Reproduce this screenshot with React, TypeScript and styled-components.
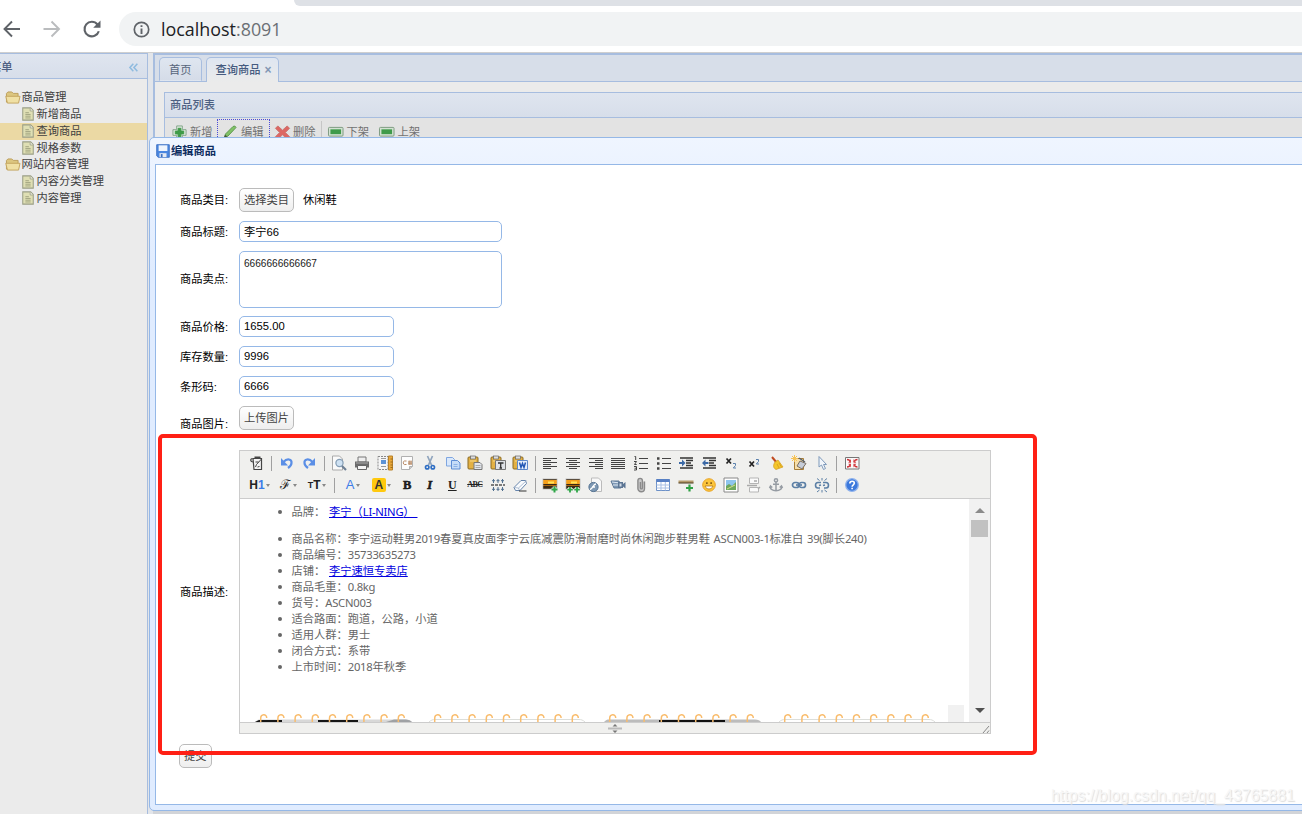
import React from 'react';
import styled, { createGlobalStyle } from 'styled-components';

const UI = `"Liberation Sans", "Noto Sans CJK SC", sans-serif`;
const LINE = '#a7bddf';

const Global = createGlobalStyle`
  * { box-sizing: border-box; }
  html, body { margin: 0; padding: 0; overflow: hidden; }
  body { font: 11.25px/17px ${UI}; color: #000; }
`;

const Page = styled.div`
  position: relative;
  width: 1302px;
  height: 814px;
  overflow: hidden;
  display: flex;
  flex-direction: column;
  background: #e2e5ea;
`;

/* ---------- browser bar ---------- */
const BrowserBar = styled.header`
  flex: none;
  height: 53px;
  background: #fff;
  border-bottom: 1px solid #cfcfcf;
  display: flex;
  flex-direction: column;
`;
const TabStrip = styled.div`
  flex: none;
  height: 6px;
  margin-left: 294px;
  background: #dee1e6;
  border-bottom-left-radius: 8px;
`;
const NavRow = styled.div`
  display: flex;
  align-items: center;
  height: 34px;
  margin-top: 6px;
`;
const NavIcons = styled.svg`
  flex: none;
  width: 119px;
  height: 34px;
`;
const Address = styled.div`
  flex: 1;
  height: 34px;
  display: flex;
  align-items: center;
  gap: 11px;
  padding-left: 14px;
  background: #f1f3f4;
  border-radius: 17px 0 0 17px;
  font: 17.9px/34px "Open Sans", sans-serif;
  color: #202124;
`;
const Port = styled.span`
  color: #6b6f74;
`;

/* ---------- page frame ---------- */
const Work = styled.div`
  flex: 1;
  display: flex;
  min-height: 0;
`;
const Sidebar = styled.aside`
  flex: none;
  width: 148px;
  background: #ebebeb;
  border: 1px solid ${LINE};
  border-width: 1px 1px 0 0;
`;
const SideHead = styled.div`
  height: 25px;
  display: flex;
  justify-content: space-between;
  align-items: center;
  padding: 2px 9px 0 0;
  background: linear-gradient(#dfe5ef, #d7deea);
  border-bottom: 1px solid ${LINE};
  color: #4d6082;
  font-weight: 500;
`;
const SideTitle = styled.span`
  margin-left: -10px;
`;
const Tree = styled.ul`
  list-style: none;
  margin: 0;
  padding: 10px 0 0;
`;
const Node = styled.li<{ $depth: number; $active?: boolean }>`
  height: 16.85px;
  line-height: 16.85px;
  display: flex;
  align-items: center;
  gap: ${p => (p.$depth ? 2 : 1)}px;
  padding-left: ${p => (p.$depth ? 20.5 : 5)}px;
  background: ${p => (p.$active ? '#ebd9a4' : 'transparent')};
  color: #404040;
  white-space: nowrap;
`;
const Main = styled.main`
  flex: 1;
  margin-left: 5px;
  background: #ebebeb;
  border-left: 2px solid ${LINE};
  border-top: 2px solid ${LINE};
`;
const TabBar = styled.div`
  height: 27px;
  display: flex;
  align-items: flex-end;
  gap: 4px;
  padding-left: 4px;
  background: #d7dee9;
  border-bottom: 1px solid ${LINE};
`;
const Tab = styled.div<{ $active?: boolean }>`
  display: flex;
  align-items: center;
  height: ${p => (p.$active ? 25 : 24)}px;
  margin-bottom: ${p => (p.$active ? -1 : 0)}px;
  padding: ${p => (p.$active ? '1px 6px 0 9px' : '2px 9px 0 9px')};
  border: 1px solid ${LINE};
  border-bottom-width: ${p => (p.$active ? 0 : 1)}px;
  border-bottom-color: transparent;
  border-radius: 5px 5px 0 0;
  background: ${p => (p.$active ? 'linear-gradient(#dfe6f1, #ebebeb)' : 'linear-gradient(#dfe6f0, #d5dce8)')};
  color: ${p => (p.$active ? '#465b80' : '#57657b')};
  font-weight: ${p => (p.$active ? 500 : 400)};
`;
const TabClose = styled.span`
  margin-left: 4px;
  color: #8296b4;
  font-size: 12px;
  font-weight: 700;
`;
const ListPanel = styled.section`
  margin: 10px 0 0 9px;
  border: 1px solid ${LINE};
  border-right: 0;
  height: 60px;
`;
const ListHead = styled.div`
  height: 25px;
  padding: 4px 5px;
  background: linear-gradient(#dfe5ef, #d7deea);
  border-bottom: 1px solid ${LINE};
  color: #4d6082;
  font-weight: 500;
`;
const ListTools = styled.div`
  display: flex;
  height: 34px;
  padding: 1px 0 0 2px;
  background: #e3e3e3;
`;
const ListTool = styled.div<{ $focus?: boolean; $width: number }>`
  display: flex;
  align-items: center;
  gap: 3px;
  height: 26px;
  width: ${p => p.$width}px;
  padding-left: 4px;
  border: 1px dotted ${p => (p.$focus ? '#4b4bd8' : 'transparent')};
  color: #727272;
  white-space: nowrap;
`;
const ToolLine = styled.i`
  width: 1px;
  height: 22px;
  margin: 2px 1px 0 1px;
  background: #c6c6c6;
`;

/* ---------- edit window ---------- */
const Shadow = styled.div`
  position: absolute;
  left: 153px;
  top: 811px;
  width: 1149px;
  height: 3px;
  background: #d2d4d8;
`;
const EditWindow = styled.section`
  position: absolute;
  left: 149px;
  top: 137px;
  width: 1170px;
  height: 674px;
  padding: 0 5px 5px;
  border: 1px solid #95b8e7;
  border-radius: 5px;
  background: linear-gradient(#eff5ff, #e0ecff 20%);
  display: flex;
  flex-direction: column;
`;
const WindowTitle = styled.h1`
  flex: none;
  display: flex;
  align-items: center;
  gap: 1px;
  height: 26px;
  margin: 0;
  padding-left: 1px;
  font-size: 11.25px;
  font-weight: 700;
  color: #0e2d5f;
`;
const WindowBody = styled.form`
  flex: 1;
  border: 1px solid #95b8e7;
  background: #fff;
  padding: 23px 0 0 24px;
`;
const Row = styled.div<{ $h: number; $gap?: number }>`
  display: flex;
  align-items: center;
  height: ${p => p.$h}px;
  margin-bottom: ${p => p.$gap ?? 9}px;
`;
const Label = styled.label<{ $drop?: number }>`
  width: 59px;
  padding-top: ${p => p.$drop ?? 0}px;
`;
const Button = styled.button`
  height: 24px;
  padding: 0 4px;
  border: 1px solid #bbb;
  border-radius: 5px;
  background: linear-gradient(#fff, #eee);
  color: #444;
  font: 11.25px/20px ${UI};
`;
const Submit = styled(Button)`
  display: block;
  margin-left: -1px;
`;
const Note = styled.span`
  margin-left: 9px;
`;
const Input = styled.input<{ $w: number }>`
  width: ${p => p.$w}px;
  height: 21px;
  padding: 0 4px 1.5px;
  border: 1px solid #95b8e7;
  border-radius: 5px;
  outline: 0;
  font: 11.25px ${UI};
`;
const Area = styled.textarea`
  width: 263px;
  height: 57px;
  padding: 5px 4px;
  border: 1px solid #95b8e7;
  border-radius: 5px;
  outline: 0;
  resize: none;
  overflow: hidden;
  color: #222;
  font: 10.1px/13px ${UI};
`;

/* ---------- rich text editor ---------- */
const Editor = styled.div`
  width: 752px;
  height: 284px;
  border: 1px solid #ccc;
  display: flex;
  flex-direction: column;
`;
const EditorTools = styled.div`
  flex: none;
  height: 48px;
  padding: 1px 0 0 5.5px;
  background: #f0f0ee;
  border-bottom: 1px solid #ccc;
`;
const ToolRow = styled.div`
  display: flex;
  align-items: center;
  height: 22px;
`;
const Slot = styled.span<{ $w: number }>`
  flex: none;
  width: ${p => p.$w}px;
  height: 18px;
  display: flex;
  align-items: center;
  justify-content: center;
`;
const Bar = styled.i`
  flex: none;
  width: 1px;
  height: 15px;
  margin: 0 3.2px;
  background: #a0a0a0;
`;
const Glyph = styled.svg`
  display: block;
  flex: none;
  overflow: visible;
`;
const Canvas = styled.div`
  flex: 1;
  min-height: 0;
  display: flex;
  background: #fff;
`;
const Content = styled.div`
  flex: 1;
  min-width: 0;
  display: flex;
  flex-direction: column;
  color: #666;
  font: 11.25px/16px "Noto Sans", "Noto Sans CJK SC", sans-serif;
`;
const Bullets = styled.ul<{ $top: number }>`
  list-style: none;
  margin: ${p => p.$top}px 0 0;
  padding: 0 0 0 38px;
`;
const Bullet = styled.li`
  height: 16px;
  display: flex;
  align-items: center;
  white-space: pre;
  &::before {
    content: '';
    width: 4px;
    height: 4px;
    margin: 0 9.5px 0 0;
    border-radius: 2px;
    background: #666;
  }
`;
const Latin = styled.span`
  letter-spacing: -0.27px;
  word-spacing: 1px;
`;
const Link = styled.a`
  margin-left: 0.8px;
  color: #0000e0;
  text-decoration: underline;
`;
const Strip = styled.svg`
  display: block;
  margin-top: auto;
  overflow: visible;
`;
const Scroll = styled.div`
  width: 21px;
  display: flex;
  flex-direction: column;
  align-items: center;
  justify-content: space-between;
  background: #f1f1f1;
`;
const Thumb = styled.div`
  width: 17px;
  height: 17px;
  margin-top: 6px;
  background: #c1c1c1;
`;
const ScrollTop = styled.div`
  display: flex;
  flex-direction: column;
  align-items: center;
  padding-top: 9px;
`;
const Arrow = styled.i<{ $down?: boolean }>`
  border: 5px solid transparent;
  border-top: ${p => (p.$down ? '5px solid #505050' : '0')};
  border-bottom: ${p => (p.$down ? '0' : '5px solid #8b8b8b')};
  margin-bottom: ${p => (p.$down ? 9 : 1)}px;
`;
const StatusBar = styled.div`
  flex: none;
  height: 11px;
  display: flex;
  align-items: center;
  justify-content: space-between;
  padding-left: 368px;
  background: #f0f0ee;
  border-top: 1px solid #ccc;
`;

const RedFrame = styled.div`
  position: absolute;
  left: 158px;
  top: 434px;
  width: 879px;
  height: 321px;
  border: 4px solid #ff2015;
  border-radius: 5px;
`;
const Watermark = styled.div`
  position: absolute;
  left: 1051px;
  top: 786px;
  font: 16px/20px "Liberation Sans", sans-serif;
  letter-spacing: -0.05px;
  color: #f7f7f7;
  text-shadow: 1px 1px 1px #dcdcdc;
  white-space: nowrap;
`;

const clip = (
  <>
    <rect x="1" y="2" width="10" height="12" rx="1" fill="#e3b144" stroke="#8a6a22" />
    <rect x="3.5" y="1" width="5" height="3" fill="#ddd" stroke="#666" strokeWidth=".7" />
    <path d="M3 6h6" stroke="#f6d88a" />
  </>
);
const sunset = (
  <>
    <path d="M1 2h14v10H1z" fill="#3b2914" />
    <path d="M1 3h14v4H1z" fill="#f5a01c" />
    <path d="M6 4.500h6v2H6z" fill="#ffe35a" />
    <path d="M1 8.500h14" stroke="#a8660f" />
    <path d="M.8 1.800h14.400v10.400H.8z" fill="none" stroke="#c8c8c8" strokeWidth=".8" />
  </>
);
const chain = '#5b7fa5';

const icons: Record<string, React.ReactNode> = {
  source: (
    <g fill="none" stroke="#444">
      <path d="M4 3.500h8.500v11H5z" fill="#f4f4f4" strokeWidth="1.200" />
      <path d="M5.500 2.500h6" strokeWidth="2" />
      <path d="M4.500 7C1 7 1 3.500 3.500 3.500" strokeWidth="1.200" />
      <path d="M6.500 12l1-2.500 5-5.500M6.500 7h3M8.500 12l2-.5" strokeWidth="1" />
    </g>
  ),
  undo: (
    <>
      <path d="M4.500 7c3.500-4 8.500-3 8 1 0 2-1.500 3.500-3.500 5" fill="none" stroke="#5b8fe6" strokeWidth="2.200" />
      <path d="M2 3v7.500h7z" fill="#5b8fe6" />
    </>
  ),
  redo: (
    <>
      <path d="M11.500 7c-3.500-4-8.500-3-8 1 0 2 1.500 3.500 3.500 5" fill="none" stroke="#5b8fe6" strokeWidth="2.200" />
      <path d="M14 3v7.500H7z" fill="#5b8fe6" />
    </>
  ),
  preview: (
    <>
      <path d="M1.500 1h7l3 3v11h-10z" fill="#fafafa" stroke="#aaa" />
      <circle cx="8.500" cy="8" r="3.600" fill="#cfe2f3" stroke="#849db5" strokeWidth="1.200" />
      <path d="M11 11l4 4" stroke="#6d7f94" strokeWidth="2.200" />
    </>
  ),
  print: (
    <>
      <path d="M4 2h8v5H4z" fill="#eee" stroke="#777" />
      <path d="M1 6.500h14v6H1z" fill="#6b6b6b" />
      <path d="M2 8h12" stroke="#aaa" />
      <path d="M3.500 10.500h9v4h-9z" fill="#f5f5f5" stroke="#666" />
    </>
  ),
  template: (
    <>
      <path d="M1 1.500h10v13H1z" fill="#f6f6f6" stroke="#888" strokeDasharray="2 1" />
      <path d="M4 5h5v4H4z" fill="#5d93d6" />
      <path d="M4 11.500h5M4 3.500h5" stroke="#999" />
      <path d="M11.500 1h4v14h-4z" fill="#e9a83a" stroke="#b8822a" />
      <path d="M13.500 4h2M13.500 7h2M13.500 10h2M13.500 12.500h2" stroke="#7b5310" strokeWidth=".7" />
    </>
  ),
  code: (
    <>
      <path d="M2.500 1.500h11v10l-3 3h-8z" fill="#fdfdfd" stroke="#b0b0b0" />
      <path d="M10.500 14.500v-3h3" fill="#ccc" stroke="#b0b0b0" />
      <path d="M7.500 6H5.300C4 6 4 9.500 5.300 9.500h2.200M9 7h4M9 8.800h4M10.200 5.500v4.500M12 5.500v4.500" fill="none" stroke="#b98a64" />
    </>
  ),
  cut: (
    <>
      <path d="M5.500 1l4 9M10.500 1l-4 9" stroke="#8fa4bd" strokeWidth="1.700" />
      <circle cx="5.200" cy="12.200" r="1.700" fill="none" stroke="#2f6fc4" strokeWidth="1.700" />
      <circle cx="10.800" cy="12.200" r="1.700" fill="none" stroke="#2f6fc4" strokeWidth="1.700" />
    </>
  ),
  copy: (
    <>
      <path d="M1.500 2.500h6l2 2v6.500h-8z" fill="#d9e8fb" stroke="#7fa6e0" />
      <path d="M6.500 5.500h6l2.500 2.500v6h-8.500z" fill="#c6dcf8" stroke="#5f8dd4" />
      <path d="M8.500 9.500h4M8.500 11.500h4" stroke="#7fa6e0" strokeWidth=".8" />
    </>
  ),
  paste: (
    <>
      {clip}
      <path d="M7 7.500h6l2 2v5H7z" fill="#e2e6ec" stroke="#777" />
      <path d="M8.500 10.500h5M8.500 12.500h5" stroke="#999" strokeWidth=".8" />
    </>
  ),
  pasteText: (
    <>
      {clip}
      <path d="M5.500 5.500h10v9h-10z" fill="#dfe2e6" stroke="#777" />
      <path d="M8 8h5.500M10.700 8v5M9.500 13h2.500" stroke="#333" strokeWidth="1.300" />
    </>
  ),
  pasteWord: (
    <>
      {clip}
      <path d="M5.500 5.500h10v9h-10z" fill="#e6effb" stroke="#5f8acb" />
      <path d="M7.500 7.500l1.500 5 1.500-4 1.500 4 1.500-5" fill="none" stroke="#2358b5" strokeWidth="1.500" />
    </>
  ),
  left: <path d="M1 3.500h14M1 5.500h8M1 7.500h14M1 9.500h8M1 11.500h14M1 13.500h8" stroke="#444" strokeWidth="1.050" />,
  center: <path d="M1 3.500h14M4 5.500h8M1 7.500h14M4 9.500h8M1 11.500h14M4 13.500h8" stroke="#444" strokeWidth="1.050" />,
  right: <path d="M1 3.500h14M7 5.500h8M1 7.500h14M7 9.500h8M1 11.500h14M7 13.500h8" stroke="#444" strokeWidth="1.050" />,
  full: <path d="M1 3.500h14M1 5.500h14M1 7.500h14M1 9.500h14M1 11.500h14M1 13.500h14" stroke="#444" strokeWidth="1.050" />,
  ol: (
    <path
      d="M6 3.500h9M6 8.500h9M6 13.500h9M1.500 1.500h1.200v3.500M1 6.500h2.500l-2 3h2.200M1 11.500h2.500v3.500H1M1.500 13.200h2"
      fill="none"
      stroke="#444"
    />
  ),
  ul: (
    <>
      <path d="M6 3.500h9M6 8.500h9M6 13.500h9" stroke="#444" />
      <path d="M1 2.300h2.500v2.400H1zM1 7.300h2.500v2.400H1zM1 12.300h2.500v2.400H1z" fill="#444" />
    </>
  ),
  indent: (
    <>
      <path d="M2 3h13M8 5.500h7M8 8h5M8 10.500h7M2 13h13" stroke="#333" strokeWidth="1.300" />
      <path d="M1 7h3V4.500L7.500 8 4 11.500V9H1z" fill="#3b69a6" />
    </>
  ),
  outdent: (
    <>
      <path d="M2 3h13M8 5.500h7M8 8h5M8 10.500h7M2 13h13" stroke="#333" strokeWidth="1.300" />
      <path d="M7.500 7h-3V4.500L1 8l3.500 3.500V9h3z" fill="#3b69a6" />
    </>
  ),
  sub: (
    <>
      <path d="M3.500 3.500l4.500 5M8 3.500l-4.500 5" stroke="#222" strokeWidth="1.700" />
      <path d="M10 8.500h2.500v2L10.300 13H13" fill="none" stroke="#5a80ad" />
    </>
  ),
  sup: (
    <>
      <path d="M3.500 6.500l4.500 5M8 6.500l-4.500 5" stroke="#222" strokeWidth="1.700" />
      <path d="M10 4.500h2.500v2L10.300 9H13" fill="none" stroke="#5a80ad" />
    </>
  ),
  broom: (
    <>
      <path d="M3 2l5 6" stroke="#c04a20" strokeWidth="2" />
      <path d="M6 7l3-2 5 7-7 2.500C4 13 4 10 6 7z" fill="#f5c62c" stroke="#d19a1a" strokeWidth=".7" />
      <path d="M8 9l2 4M10 8l2.500 4" stroke="#d39d16" strokeWidth=".8" />
    </>
  ),
  format: (
    <>
      <path d="M3.500 3.500h9v11h-9z" fill="#f7dfaa" stroke="#a77c37" />
      <path d="M9 6l6 2.500-4 5.500-5-3z" fill="#c5ccd8" stroke="#7a6e62" />
      <path d="M3.500 0v7M0 3.500h7M1 1l5 5M6 1L1 6" stroke="#f7c355" />
      <path d="M8 3l6 4" stroke="#55616e" strokeWidth="1.300" />
    </>
  ),
  select: <path d="M5 1.500v10.500l2.500-2 2 4.500 2-1-2-4h3z" fill="#f2f6fb" stroke="#7f9abb" />,
  screen: (
    <>
      <path d="M1.500 2.500h13.500v11.500H1.500z" fill="#fafafa" stroke="#777" />
      <path d="M3 4.500c2 0 3 1 3.500 2.500M13.500 4.500c-2 0-3 1-3.500 2.500M3 12c2 0 3-1 3.500-2.500M13.500 12c-2 0-3-1-3.500-2.500" fill="none" stroke="#cc3237" strokeWidth="1.300" />
      <path d="M7 4v3.800H4.200zM9.500 4v3.800h2.800zM7 12.500V8.800H4.200zM9.500 12.500V8.800h2.800z" fill="#d6454a" />
    </>
  ),
  rule: (
    <>
      <path d="M1 8h14" stroke="#555" strokeWidth="1.400" strokeDasharray="3 1" />
      <path d="M3.500 2v4M8 2v4M12.500 2v4M3.500 10v4M8 10v4M12.500 10v4M2 3.700h3M6.500 3.700h3M11 3.700h3M2 12.300h3M6.500 12.300h3M11 12.300h3" stroke="#52708f" />
    </>
  ),
  eraser: (
    <>
      <path d="M2 10.500L9 3.500h4.500l1 3-6.500 7H3.500z" fill="#f8fafc" stroke="#6684ab" />
      <path d="M2 10.500l4.500.5 8-7.500M6.500 11l1 2.500" fill="none" stroke="#8fa5c2" strokeWidth=".7" />
      <path d="M7 14h7.500" stroke="#333" />
    </>
  ),
  image: (
    <>
      {sunset}
      <path d="M12.500 9.500v6M9.500 12.500h6" stroke="#f0f0ee" strokeWidth="3.600" />
      <path d="M12.500 9.500v6M9.500 12.500h6" stroke="#2fa648" strokeWidth="2" />
    </>
  ),
  images: (
    <>
      {sunset}
      <path d="M5 10v5.500M2.300 12.700h5.500M12 10v5.500M9.300 12.700h5.500" stroke="#f0f0ee" strokeWidth="3.400" />
      <path d="M5 10v5.500M2.300 12.700h5.500M12 10v5.500M9.300 12.700h5.500" stroke="#2fa648" strokeWidth="1.800" />
    </>
  ),
  flash: (
    <>
      <path d="M4.500 1h7l3 3v10.500h-10z" fill="#f8f8f8" stroke="#bbb" />
      <circle cx="6.500" cy="10" r="4.600" fill="#7e98b3" stroke="#547393" />
      <path d="M9 7c-3 0-3 5-6 5.500M5 10h3" fill="none" stroke="#fff" strokeWidth="1.300" />
    </>
  ),
  media: (
    <>
      <path d="M1 4h8l2 7H4z" fill="#7d97b4" stroke="#5d7897" />
      <path d="M2 5l8 1M3 8h7" stroke="#dfe9f3" />
      <path d="M8 5h5v6H8z" fill="#5c7593" />
      <path d="M13 7l2.500-2v6.500L13 9.500z" fill="#5c7593" />
      <path d="M9.500 6.500h2v3h-2z" fill="#d1dce8" />
    </>
  ),
  file: (
    <path
      d="M11.500 4.500v7a3.300 3.300 0 0 1-6.600 0V3.600a2.200 2.200 0 0 1 4.500 0v7.300a1 1 0 0 1-2 0V5"
      fill="#c9c9c9"
      stroke="#8a8a8a"
      strokeWidth="1.400"
    />
  ),
  table: (
    <>
      <path d="M1.500 2.500h13v11h-13z" fill="#fff" stroke="#6c90c7" />
      <path d="M1.500 2h13v3h-13z" fill="#5880c4" />
      <path d="M1.500 8h13M1.500 11h13M6 5v8.500M10.300 5v8.500" stroke="#a9c0e4" />
    </>
  ),
  hr: (
    <>
      <path d="M.5 3.500h15V6H.5z" fill="#b59a6b" />
      <path d="M.5 6h15" stroke="#47361c" />
      <path d="M11.500 7.500v7M8 11h7" stroke="#30a145" strokeWidth="2.200" />
    </>
  ),
  smile: (
    <>
      <circle cx="8" cy="8" r="6.300" fill="#fcc53a" stroke="#e9a52a" />
      <path d="M5 6.200h1.700M9.300 6.200H11" stroke="#8a5f15" strokeWidth="1.700" />
      <path d="M4 9c1.500 4 6.500 4 8 0z" fill="#fff" stroke="#b57a1a" strokeWidth=".8" />
    </>
  ),
  map: (
    <>
      <path d="M1 1h14v14H1z" fill="#fff" stroke="#888" />
      <path d="M3 3h10v10H3z" fill="#8ec5ee" />
      <path d="M3 9l3-2 3 2 4-4v8H3z" fill="#6ea85d" />
      <path d="M4 12l8-4" stroke="#d9df89" />
    </>
  ),
  page: (
    <>
      <path d="M3.500 1v5.500h9V1zM3.500 15v-4.500h9V15z" fill="#fbfbfb" stroke="#b5b5b5" />
      <path d="M1 8.500h10M12 12l2-2M8 4h3" stroke="#aaa" strokeWidth="1.300" />
    </>
  ),
  anchor: (
    <g fill="none" stroke="#969ca3" strokeWidth="1.500">
      <circle cx="8" cy="3.300" r="1.600" />
      <path d="M8 5v9M5 7.300h6M2 9.500c.5 5.500 11.500 5.500 12 0M1.500 11l1-2 1.800 1.500M14.500 11l-1-2-1.800 1.500" />
    </g>
  ),
  link: (
    <g fill="none" stroke={chain} strokeWidth="1.700">
      <rect x="1.500" y="5.500" width="6.500" height="5" rx="2.500" />
      <rect x="8" y="5.500" width="6.500" height="5" rx="2.500" />
      <path d="M5 8h6" />
    </g>
  ),
  unlink: (
    <g fill="none" stroke={chain} strokeWidth="1.600">
      <path d="M7 5.500H4C.7 5.500.7 11 4 11h2M9 5.500h3c3.300 0 3.300 5.500 0 5.500h-2M5 8.500l2-.5M9 8.500l2-.5" />
      <path d="M3 1.500l2.500 2M8 1v2.500M13 1.500l-2.500 2M3 15l2.500-2M8 15.500V13M13 15l-2.500-2" strokeWidth="1" />
    </g>
  ),
  help: (
    <>
      <circle cx="8" cy="8" r="6.300" fill="#3c79dc" stroke="#8fb2ec" strokeWidth="1.300" />
      <path d="M5.800 6.500c0-3 4.700-3 4.500-.2 0 1.500-2.200 1.500-2.200 3.400M8.100 10.800v1.500" fill="none" stroke="#fff" strokeWidth="1.600" />
    </>
  ),
  folder: (
    <>
      <path d="M1.500 12.500V3.500l1.500-1.500h4l1.500 1.500h5v9z" fill="#dcc67f" stroke="#bd9f5c" />
      <path d="M3 6.500h12.500l-1.500 7H2.500L.8 6.500z" fill="#f0e0a4" stroke="#c4a560" />
    </>
  ),
  leaf: (
    <>
      <path d="M2 1h9l3 3v11H2z" fill="#dfdfb4" stroke="#9b9f86" strokeWidth="1.200" />
      <path d="M10.500 1.500v3h3" fill="#fff" stroke="#9b9f86" />
      <path d="M5 6.500h4M5 8.500h6M5 10.500h6M5 12.500h6" stroke="#9b9f7c" />
    </>
  ),
  add: (
    <>
      <path d="M5 1h6v4h4v6h-4v4H5v-4H1V5h4z" fill="#e2ebe2" stroke="#7fa385" strokeLinejoin="round" />
      <path d="M6.500 3.500h3v3h3v3h-3v3h-3v-3h-3v-3h3z" fill="#3f9b48" stroke="#3f9b48" />
    </>
  ),
  edit: (
    <>
      <path d="M2 14l1.500-4L11 2.500q2-1.500 3 1L6 12z" fill="#81c266" stroke="#5f9a51" />
      <path d="M2 14l1.200-3.200 2 1.700z" fill="#48533f" />
    </>
  ),
  remove: (
    <path
      d="M3 1L8 5.500 13 1l2.500 2.500L11 8l4.500 4.500L13 15l-5-4.500L3 15 .5 12.500 5 8 .5 3.500z"
      fill="#dd6763"
      stroke="#c9716c"
      strokeLinejoin="round"
    />
  ),
  shelf: (
    <>
      <rect x=".5" y="3.500" width="15" height="9" rx="1" fill="#d4e2d3" stroke="#7d9b81" />
      <path d="M2.500 5.500h11v5h-11z" fill="#3f9b4a" />
    </>
  ),
  save: (
    <>
      <path d="M.8.800h14.400v14.400H2.500L.8 13.500z" fill="#4a86e0" stroke="#3a6fc4" />
      <path d="M3 1.500h10v6.500H3z" fill="#eef4fd" />
      <path d="M4 10.500h8V15H4z" fill="#e6eaf2" />
      <path d="M5.500 11.500h2V15h-2z" fill="#3a6fc4" />
    </>
  ),
};

function Icon({ name, size = 16 }: { name: string; size?: number }) {
  return (
    <Glyph width={size} height={size} viewBox="0 0 16 16">
      {icons[name]}
    </Glyph>
  );
}

const LetterTool = styled.span<{ $color?: string; $size?: number; $serif?: boolean; $bold?: boolean; $italic?: boolean }>`
  font-family: ${p => (p.$serif ? '"Liberation Serif", serif' : '"Liberation Sans", sans-serif')};
  font-size: ${p => p.$size ?? 13}px;
  line-height: 18px;
  font-weight: ${p => (p.$bold ? 700 : 400)};
  font-style: ${p => (p.$italic ? 'italic' : 'normal')};
  color: ${p => p.$color ?? '#222'};
`;
const HeavyLetter = styled(LetterTool)`
  -webkit-text-stroke: 0.5px #111;
`;
const Highlight = styled.span`
  width: 14px;
  height: 14px;
  border-radius: 2px;
  background: #ffc90e;
  text-align: center;
  font: 700 12px/14px "Liberation Sans", sans-serif;
  color: #333;
`;
const Underlined = styled(LetterTool)`
  text-decoration: underline;
`;
const Struck = styled(LetterTool)`
  text-decoration: line-through;
  text-decoration-thickness: 0.6px;
  letter-spacing: -0.5px;
`;
const Caret = styled.i`
  margin: 1px 0 0 1.5px;
  border: 2.5px solid transparent;
  border-top: 3px solid #888;
  border-bottom: 0;
`;

const tools1 = [
  'source', '|', 'undo', 'redo', '|', 'preview', 'print', 'template', 'code', 'cut', 'copy', 'paste', 'pasteText',
  'pasteWord', '|', 'left', 'center', 'right', 'full', 'ol', 'ul', 'indent', 'outdent', 'sub', 'sup', 'broom',
  'format', 'select', '|', 'screen',
];
const tools2 = [
  'rule', 'eraser', '|', 'image', 'images', 'flash', 'media', 'file', 'table', 'hr', 'smile', 'map', 'page', 'anchor',
  'link', 'unlink', '|', 'help',
];

function Tools({ names }: { names: string[] }) {
  return (
    <>
      {names.map((n, i) =>
        n === '|' ? (
          <Bar key={i} />
        ) : (
          <Slot key={i} $w={22.63}>
            <Icon name={n} size={16} />
          </Slot>
        ),
      )}
    </>
  );
}

const tree = [
  { text: '商品管理', depth: 0 },
  { text: '新增商品', depth: 1 },
  { text: '查询商品', depth: 1, active: true },
  { text: '规格参数', depth: 1 },
  { text: '网站内容管理', depth: 0 },
  { text: '内容分类管理', depth: 1 },
  { text: '内容管理', depth: 1 },
];

function CalendarStrip() {
  return (
    <Strip width="730" height="9" viewBox="240 713 730 9">
      {[
        { x: 255, kind: 'dark' },
        { x: 429, kind: 'light' },
        { x: 604, kind: 'grey' },
        { x: 779, kind: 'light' },
      ].map(({ x, kind }) => (
        <g key={x} transform={`translate(${x} 0)`}>
          {kind === 'light' ? (
            <path d="M0 722c2-2 4-2.500 6-2.500h144c2 0 4 .5 6 2.500" fill="none" stroke="#dcdeda" />
          ) : (
            <>
              <path d="M0 722c2-2 3-2.500 5-2.500h146c3 0 5 1 6 2.500z" fill={kind === 'dark' ? '#d8d8d8' : '#bcbcbc'} />
              {kind === 'dark' ? (
                <>
                  <path d="M0 722l4-2h23v2zM63 720h40v2H63z" fill="#161616" />
                  <path d="M131 722l8-2.500h12q4 0 6 2.500z" fill="#9fa1a4" />
                </>
              ) : (
                <path d="M55 720h66v2H55z" fill="#111" />
              )}
            </>
          )}
          {Array.from({ length: 9 }, (_, i) => (
            <path key={i} d={`M${5.7 + i * 17.2} 722v-3.500c0-4.700 6-5 6-.6`} fill="none" stroke="#f9bc6c" strokeWidth="1.500" />
          ))}
        </g>
      ))}
      <path d="M948 705h16v17h-16z" fill="#f1f1f1" />
    </Strip>
  );
}

export default function App() {
  return (
    <Page>
      <Global />
      <BrowserBar>
        <TabStrip />
        <NavRow>
          <NavIcons viewBox="0 0 119 34" fill="none" strokeWidth="1.900">
            <path d="M20 17H5M12 9.500L4.500 17l7.500 7.500" stroke="#5f6368" />
            <path d="M43.500 17h15M51.500 9.500L59 17l-7.500 7.500" stroke="#babcbe" />
            <path d="M97.500 12.500a7.300 7.300 0 1 0 1.300 6.700" stroke="#5f6368" strokeWidth="2.100" />
            <path d="M100.500 8.500v7.300h-7.300z" fill="#5f6368" />
          </NavIcons>
          <Address>
            <Glyph width="17" height="17" viewBox="0 0 17 17">
              <circle cx="8.500" cy="8.500" r="7.200" fill="none" stroke="#5f6368" strokeWidth="1.700" />
              <path d="M8.500 7.500V13M8.500 4.200v1.900" stroke="#5f6368" strokeWidth="1.900" />
            </Glyph>
            <span>
              localhost<Port>:8091</Port>
            </span>
          </Address>
        </NavRow>
      </BrowserBar>

      <Work>
        <Sidebar>
          <SideHead>
            <SideTitle>菜单</SideTitle>
            <Glyph width="9" height="9" viewBox="0 0 10 10" fill="none" stroke="#8fbbdf" strokeWidth="1.700">
              <path d="M4.800.8L1 5l3.800 4.200M9.300.8L5.500 5l3.800 4.200" />
            </Glyph>
          </SideHead>
          <Tree>
            {tree.map(n => (
              <Node key={n.text} $depth={n.depth} $active={n.active}>
                <Icon name={n.depth ? 'leaf' : 'folder'} size={n.depth ? 14 : 15.5} />
                {n.text}
              </Node>
            ))}
          </Tree>
        </Sidebar>
        <Main>
          <TabBar>
            <Tab>首页</Tab>
            <Tab $active>
              查询商品<TabClose>×</TabClose>
            </Tab>
          </TabBar>
          <ListPanel>
            <ListHead>商品列表</ListHead>
            <ListTools>
              <ListTool $width={50}><Icon name="add" size={15} />新增</ListTool>
              <ListTool $width={53} $focus><Icon name="edit" size={16} />编辑</ListTool>
              <ListTool $width={50}><Icon name="remove" size={15} />删除</ListTool>
              <ToolLine />
              <ListTool $width={51}><Icon name="shelf" size={15.5} />下架</ListTool>
              <ListTool $width={51}><Icon name="shelf" size={15.5} />上架</ListTool>
            </ListTools>
          </ListPanel>
        </Main>
      </Work>

      <Shadow />
      <EditWindow>
        <WindowTitle>
          <Icon name="save" size={14} />
          编辑商品
        </WindowTitle>
        <WindowBody>
          <Row $h={24}>
            <Label>商品类目:</Label>
            <Button type="button">选择类目</Button>
            <Note>休闲鞋</Note>
          </Row>
          <Row $h={21}>
            <Label $drop={1}>商品标题:</Label>
            <Input $w={263} defaultValue="李宁66" />
          </Row>
          <Row $h={57} $gap={8}>
            <Label>商品卖点:</Label>
            <Area defaultValue="6666666666667" />
          </Row>
          <Row $h={21}>
            <Label $drop={1}>商品价格:</Label>
            <Input $w={155} defaultValue="1655.00" />
          </Row>
          <Row $h={21}>
            <Label $drop={1}>库存数量:</Label>
            <Input $w={155} defaultValue="9996" />
          </Row>
          <Row $h={21}>
            <Label $drop={1}>条形码:</Label>
            <Input $w={155} defaultValue="6666" />
          </Row>
          <Row $h={24} $gap={20}>
            <Label $drop={12}>商品图片:</Label>
            <Button type="button">上传图片</Button>
          </Row>
          <Row $h={284} $gap={10}>
            <Label>商品描述:</Label>
            <Editor>
              <EditorTools>
                <ToolRow><Tools names={tools1} /></ToolRow>
                <ToolRow>
                  <Slot $w={28.6}><LetterTool $bold $size={12}>H</LetterTool><LetterTool $bold $size={12} $color="#3c7ce8">1</LetterTool><Caret /></Slot>
                  <Slot $w={28.6}><LetterTool $serif $size={13}>ℱ</LetterTool><Caret /></Slot>
                  <Slot $w={28.6}><LetterTool $bold $size={9}>T</LetterTool><LetterTool $bold $size={12}>T</LetterTool><Caret /></Slot>
                  <Bar />
                  <Slot $w={28.6}><LetterTool $size={13} $color="#3c7ce8">A</LetterTool><Caret /></Slot>
                  <Slot $w={28.6}><Highlight>A</Highlight><Caret /></Slot>
                  <Slot $w={22.6}><HeavyLetter $serif $bold $size={12.5}>B</HeavyLetter></Slot>
                  <Slot $w={22.6}><HeavyLetter $serif $bold $italic $size={12.5}>I</HeavyLetter></Slot>
                  <Slot $w={22.6}><Underlined $serif $bold $size={12}>U</Underlined></Slot>
                  <Slot $w={22.6}><Struck $serif $bold $size={8}>ABC</Struck></Slot>
                  <Tools names={tools2} />
                </ToolRow>
              </EditorTools>
              <Canvas>
                <Content>
                  <Bullets $top={5}>
                    <Bullet>品牌： <Link>李宁（<Latin>LI-NING</Latin>） </Link></Bullet>
                  </Bullets>
                  <Bullets $top={11}>
                    <Bullet>商品名称：李宁运动鞋男<Latin>2019</Latin>春夏真皮面李宁云底减震防滑耐磨时尚休闲跑步鞋男鞋<Latin> ASCN003-1</Latin>标准白<Latin> 39(</Latin>脚长<Latin>240)</Latin></Bullet>
                    <Bullet>商品编号：<Latin>35733635273</Latin></Bullet>
                    <Bullet>店铺： <Link>李宁速恒专卖店</Link></Bullet>
                    <Bullet>商品毛重：<Latin>0.8kg</Latin></Bullet>
                    <Bullet>货号：<Latin>ASCN003</Latin></Bullet>
                    <Bullet>适合路面：跑道，公路，小道</Bullet>
                    <Bullet>适用人群：男士</Bullet>
                    <Bullet>闭合方式：系带</Bullet>
                    <Bullet>上市时间：<Latin>2018</Latin>年秋季</Bullet>
                  </Bullets>
                  <CalendarStrip />
                </Content>
                <Scroll>
                  <ScrollTop>
                    <Arrow />
                    <Thumb />
                  </ScrollTop>
                  <Arrow $down />
                </Scroll>
              </Canvas>
              <StatusBar>
                <Glyph width="14" height="9" viewBox="0 0 14 9">
                  <path d="M0 3.500h14v2H0z" fill="#bbb" />
                  <path d="M7 0l2.500 2.500h-5zM7 9l2.500-2.500h-5z" fill="#777" />
                </Glyph>
                <Glyph width="9" height="9" viewBox="0 0 9 9" stroke="#888">
                  <path d="M2 9l6-7M6 9l2-2.500" />
                </Glyph>
              </StatusBar>
            </Editor>
          </Row>
          <Submit type="button">提交</Submit>
        </WindowBody>
      </EditWindow>
      <RedFrame />
      <Watermark>https://blog.csdn.net/qq_43765881</Watermark>
    </Page>
  );
}
